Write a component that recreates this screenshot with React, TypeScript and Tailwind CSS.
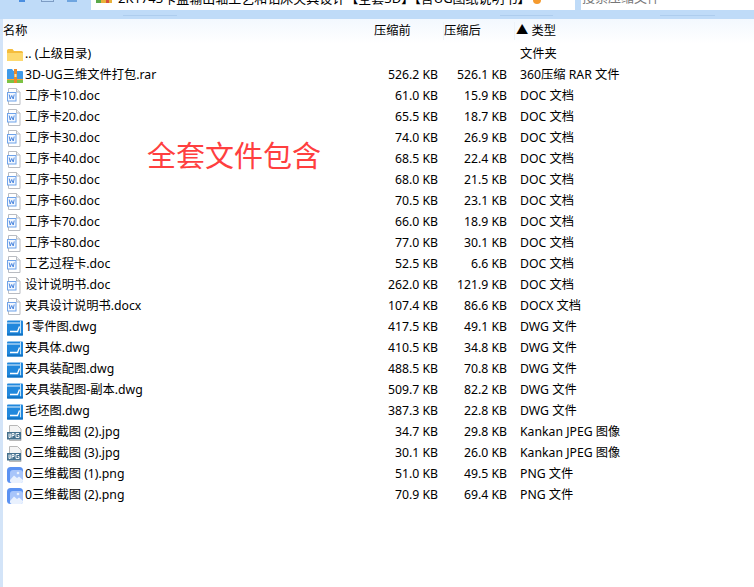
const rows = [
  { name: ".. (上级目录)", before: "", after: "", type: "文件夹", icon: "folder" },
  { name: "3D-UG三维文件打包.rar", before: "526.2 KB", after: "526.1 KB", type: "360压缩 RAR 文件", icon: "rar" },
  { name: "工序卡10.doc", before: "61.0 KB", after: "15.9 KB", type: "DOC 文档", icon: "doc" },
  { name: "工序卡20.doc", before: "65.5 KB", after: "18.7 KB", type: "DOC 文档", icon: "doc" },
  { name: "工序卡30.doc", before: "74.0 KB", after: "26.9 KB", type: "DOC 文档", icon: "doc" },
  { name: "工序卡40.doc", before: "68.5 KB", after: "22.4 KB", type: "DOC 文档", icon: "doc" },
  { name: "工序卡50.doc", before: "68.0 KB", after: "21.5 KB", type: "DOC 文档", icon: "doc" },
  { name: "工序卡60.doc", before: "70.5 KB", after: "23.1 KB", type: "DOC 文档", icon: "doc" },
  { name: "工序卡70.doc", before: "66.0 KB", after: "18.9 KB", type: "DOC 文档", icon: "doc" },
  { name: "工序卡80.doc", before: "77.0 KB", after: "30.1 KB", type: "DOC 文档", icon: "doc" },
  { name: "工艺过程卡.doc", before: "52.5 KB", after: "6.6 KB", type: "DOC 文档", icon: "doc" },
  { name: "设计说明书.doc", before: "262.0 KB", after: "121.9 KB", type: "DOC 文档", icon: "doc" },
  { name: "夹具设计说明书.docx", before: "107.4 KB", after: "86.6 KB", type: "DOCX 文档", icon: "doc" },
  { name: "1零件图.dwg", before: "417.5 KB", after: "49.1 KB", type: "DWG 文件", icon: "dwg" },
  { name: "夹具体.dwg", before: "410.5 KB", after: "34.8 KB", type: "DWG 文件", icon: "dwg" },
  { name: "夹具装配图.dwg", before: "488.5 KB", after: "70.8 KB", type: "DWG 文件", icon: "dwg" },
  { name: "夹具装配图-副本.dwg", before: "509.7 KB", after: "82.2 KB", type: "DWG 文件", icon: "dwg" },
  { name: "毛坯图.dwg", before: "387.3 KB", after: "22.8 KB", type: "DWG 文件", icon: "dwg" },
  { name: "0三维截图 (2).jpg", before: "34.7 KB", after: "29.8 KB", type: "Kankan JPEG 图像", icon: "jpg" },
  { name: "0三维截图 (3).jpg", before: "30.1 KB", after: "26.0 KB", type: "Kankan JPEG 图像", icon: "jpg" },
  { name: "0三维截图 (1).png", before: "51.0 KB", after: "49.5 KB", type: "PNG 文件", icon: "png" },
  { name: "0三维截图 (2).png", before: "70.9 KB", after: "69.4 KB", type: "PNG 文件", icon: "png" },
];

const FileIcon = ({ kind }: { kind: string }) => {
  if (kind === "folder") {
    return (
      <svg width="16" height="16" viewBox="0 0 16 16" className="block">
        <path d="M0 3.500A1.500 1.500 0 0 1 1.500 2h4l1.500 2h7.500A1.500 1.500 0 0 1 16 5.500V13a1 1 0 0 1-1 1H1a1 1 0 0 1-1-1z" fill="#f5bd3d" />
        <path d="M0 6h16v7a1 1 0 0 1-1 1H1a1 1 0 0 1-1-1z" fill="#fdd96f" />
      </svg>
    );
  }
  if (kind === "rar") {
    return (
      <svg width="16" height="16" viewBox="0 0 16 16" className="block">
        <path d="M0 2a1 1 0 0 1 1-1h4l1.500 2H15a1 1 0 0 1 1 1v8H0z" fill="#3f9ae8" />
        <rect x="0" y="12" width="16" height="3" fill="#7cc243" />
        <rect x="0" y="11" width="16" height="1" fill="#f0a63a" />
        <rect x="7" y="1" width="3" height="14" fill="#e98a2c" />
        <rect x="7.500" y="6" width="2" height="3" fill="#fbe3a6" />
      </svg>
    );
  }
  if (kind === "doc") {
    return (
      <svg width="16" height="17" viewBox="0 0 16 17" className="block">
        <path d="M1.500 0.500h8l3.500 3.500v12.500h-11.500z" fill="#fff" stroke="#b9bcc2" />
        <path d="M9.500 0.500v3.500h3.500" fill="#f0f1f3" stroke="#b9bcc2" />
        <rect x="0.500" y="4.500" width="8.500" height="8.500" fill="#f2f7fe" stroke="#6fa3ea" />
        <path d="M2.200 6.500l1 4.500 1.500-3.500 1.500 3.500 1-4.500" fill="none" stroke="#3f7fdc" strokeWidth="0.900" />
      </svg>
    );
  }
  if (kind === "dwg") {
    return (
      <svg width="16" height="16" viewBox="0 0 16 16" className="block">
        <rect x="0" y="0.500" width="16" height="15" rx="1" fill="#2188dd" />
        <rect x="0" y="2.500" width="13" height="1" fill="#e8f4fd" />
        <rect x="13" y="0.500" width="1" height="13" fill="#bfe1f8" />
        <path d="M3 11.500h7.500l2-5" fill="none" stroke="#fff" strokeWidth="1.300" />
        <rect x="0" y="13.500" width="16" height="2" fill="#1173c4" />
      </svg>
    );
  }
  if (kind === "jpg") {
    return (
      <svg width="16" height="16" viewBox="0 0 16 16" className="block">
        <path d="M2.500 0.500h8l3.500 3.500v11.500h-11.500z" fill="#f5f5f5" stroke="#b8b8b8" />
        <rect x="0" y="7" width="14" height="7.500" fill="#44708e" />
        <path d="M2 8.500v4h1.300V8.500M5 12.500V8.500h2v2H5M9 8.500h3M9 8.500v4h3v-2h-1.300" fill="none" stroke="#fff" strokeWidth="0.900" />
      </svg>
    );
  }
  return (
    <svg width="16" height="16" viewBox="0 0 16 16" className="block">
      <rect x="0" y="0" width="16" height="16" rx="3.500" fill="#5b92f2" />
      <rect x="3" y="3" width="13" height="13" rx="3" fill="#a8c5fa" />
      <path d="M3 13l4-4.500 3 2.500 2-1.500 4 3.500v1a2 2 0 0 1-2 2H5a2 2 0 0 1-2-2z" fill="#e9f1fe" />
      <circle cx="11" cy="6" r="1.300" fill="#e9f1fe" />
    </svg>
  );
};

const Splitter = ({ w, ml }: { w: string; ml: string }) => (
  <div className={`h-px bg-[#aecdee] ${w} ${ml}`}></div>
);

const App = () => {
  return (
    <div className="h-[587px] w-[754px] overflow-hidden bg-white font-['Noto_Sans','Noto_Sans_CJK_SC',sans-serif] text-[12.25px] text-black">
      {/* toolbar strip, cropped at the top */}
      <div className="h-[19px] bg-[#bfdbf8]">
        <div className="flex h-[10px]">
          <div className="flex w-[91px] items-start">
            <div className="ml-[19px] h-[2px] w-[6px] bg-[#4a8ee0]"></div>
            <div className="ml-[16px] h-[2px] w-[13px] border-x border-b border-[#7d9cc4]"></div>
            <div className="ml-[13px] h-[2px] w-[10px] bg-[#6ea5e0]"></div>
          </div>
          <div className="flex w-[484px] items-start overflow-hidden bg-white pl-[5px]">
            <div className="flex h-[3px] w-[16px] shrink-0 bg-[#e9b23a]">
              <div className="h-full w-[5px] bg-[#5aa84a]"></div>
              <div className="ml-[5px] h-full w-[3px] bg-[#d9513a]"></div>
            </div>
            <div className="ml-[6px] mt-[-11px] whitespace-nowrap text-[13px] leading-[18px] text-black">
              2K1743卡盘输出轴工艺和钻床夹具设计【全套3D】【含UG图纸说明书】
            </div>
            <div className="ml-[2px] h-[4px] w-[8px] shrink-0 rounded-b-full bg-[#f59a2e]"></div>
          </div>
          <div className="ml-[6px] flex-1 overflow-hidden bg-white pl-[1px]">
            <div className="mt-[-12px] whitespace-nowrap text-[13px] leading-[18px] text-[#777]">搜索压缩文件</div>
          </div>
        </div>
        <div className="flex h-[9px] items-start pt-[5px]">
          <Splitter w="w-[54px]" ml="ml-[123px]" />
          <Splitter w="w-[53px]" ml="ml-[323px]" />
          <Splitter w="w-[55px]" ml="ml-[107px]" />
        </div>
      </div>

      <div className="h-full border-l-[3px] border-[#d3e4f8]">
        {/* column headers */}
        <div className="flex h-[25px] items-center bg-gradient-to-b from-[#f3f8fe] to-white pb-px">
          <div className="w-[371px]">名称</div>
          <div className="w-[69px]">压缩前</div>
          <div className="w-[71px] border-l border-[#eef3f9]">压缩后</div>
          <div className="border-l border-[#eef3f9] pl-[1px]">▲ 类型</div>
        </div>

        {rows.map((row) => (
          <div className="flex h-[21px] items-center" key={row.name}>
            <div className="flex w-[372px] items-center">
              <div className="ml-[4px] w-[18px] shrink-0">
                <FileIcon kind={row.icon} />
              </div>
              <span className="whitespace-nowrap">{row.name}</span>
            </div>
            <div className="w-[63px] text-right">{row.before}</div>
            <div className="w-[69px] text-right">{row.after}</div>
            <div className="ml-[13px] whitespace-nowrap">{row.type}</div>
          </div>
        ))}
      </div>

      <div className="absolute left-[147px] top-[136px] text-[29px] leading-[40px] text-[#ff3f3f]">
        全套文件包含
      </div>
    </div>
  );
};

export default App;
